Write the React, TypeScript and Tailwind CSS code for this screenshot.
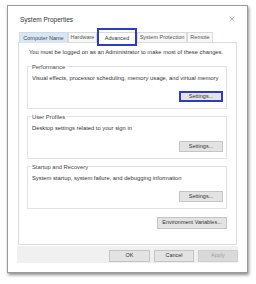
import { X } from "lucide-react";

const TABS = [
  { label: "Computer Name", w: "w-[49px]", hover: true },
  { label: "Hardware", w: "w-[29px]" },
  { label: "Advanced", w: "w-[40px]", active: true },
  { label: "System Protection", w: "w-[50px]" },
  { label: "Remote", w: "w-[26px]" },
];

function Btn({ label, size, highlight, disabled }: { label: string; size: string; highlight?: boolean; disabled?: boolean }) {
  return (
    <div
      className={`${size} flex items-center justify-center text-[5.5px] leading-none ${
        highlight
          ? "border-2 border-[#2e3cc0] bg-[#e4e4e4] text-[#333]"
          : disabled
          ? "border border-[#cfcfcf] bg-[#d9d9d9] text-[#a0a0a0]"
          : "border border-[#c4c4c4] bg-[#e3e3e3] text-[#333]"
      }`}
    >
      {label}
    </div>
  );
}

function Group({ title, desc, highlight }: { title: string; desc: string; highlight?: boolean }) {
  return (
    <div className="h-[43px] border border-[#e2e2e2] flex flex-col">
      <div className="-mt-[3px] ml-[3px] px-[1px] w-fit bg-white leading-[6px] text-[5.8px] text-[#444]">{title}</div>
      <div className="mt-[5px] pl-[4px] leading-[6px] text-[5.8px] text-[#333] whitespace-nowrap">{desc}</div>
      <div className="mt-[10px] mr-[3px] flex justify-end">
        <Btn label="Settings..." size="w-[44px] h-[11px]" highlight={highlight} />
      </div>
    </div>
  );
}

export default function App() {
  return (
    <div className="w-[256px] h-[284px] bg-white pt-[5px] pl-[7px]" style={{ fontFamily: '"Liberation Sans", Arial, sans-serif' }}>
      <div className="w-[241px] h-[268px] border border-[#9a9a9a] bg-white shadow-[1px_2px_3px_rgba(0,0,0,0.45)] flex flex-col">
        {/* title bar */}
        <div className="h-[26px] flex items-center justify-between pl-[12px] pr-[11px]">
          <span className="text-[6.5px] text-[#333] pt-[1px]">System Properties</span>
          <X size={8} strokeWidth={1.2} className="text-[#555]" />
        </div>

        {/* tabs */}
        <div className="h-[11px] pl-[11px] flex relative z-10">
          {TABS.map((t) => (
            <div
              key={t.label}
              className={`${t.w} h-[11px] flex items-center justify-center text-[5.5px] whitespace-nowrap relative border-t border-l border-r ${
                t.active
                  ? "bg-white border-[#d9d9d9] text-[#333]"
                  : t.hover
                  ? "bg-[#d9e6f3] border-[#cfdbe8] text-[#3b4a5c]"
                  : "bg-[#f7f7f7] border-[#dadada] border-b text-[#555]"
              }`}
            >
              {t.label}
              {t.active && (
                <div className="absolute -left-[1px] -right-[1px] -top-[5px] -bottom-[3px] border-2 border-[#2e3cc0]" />
              )}
            </div>
          ))}
        </div>

        {/* tab panel */}
        <div className="ml-[10px] w-[219px] h-[203px] -mt-[1px] border border-[#dcdcdc] flex flex-col">
          <div className="pt-[6px] pl-[10px] leading-[6px] text-[5.8px] text-[#333] whitespace-nowrap">
            You must be logged on as an Administrator to make most of these changes.
          </div>
          <div className="mt-[11px] ml-[8px] mr-[9px] flex flex-col gap-[7px]">
            <Group title="Performance" desc="Visual effects, processor scheduling, memory usage, and virtual memory" highlight />
            <Group title="User Profiles" desc="Desktop settings related to your sign in" />
            <Group title="Startup and Recovery" desc="System startup, system failure, and debugging information" />
          </div>
          <div className="mt-[8px] mr-[9px] flex justify-end">
            <Btn label="Environment Variables..." size="w-[70px] h-[12px]" />
          </div>
        </div>

        {/* button bar */}
        <div className="ml-[9px] w-[221px] mt-[1px] h-[17px] bg-[#f0f0f0] flex items-start justify-end gap-[4px] pt-[4px]">
          <Btn label="OK" size="w-[41px] h-[12px]" />
          <Btn label="Cancel" size="w-[40px] h-[12px]" />
          <Btn label="Apply" size="w-[40px] h-[12px]" disabled />
        </div>
      </div>
    </div>
  );
}
